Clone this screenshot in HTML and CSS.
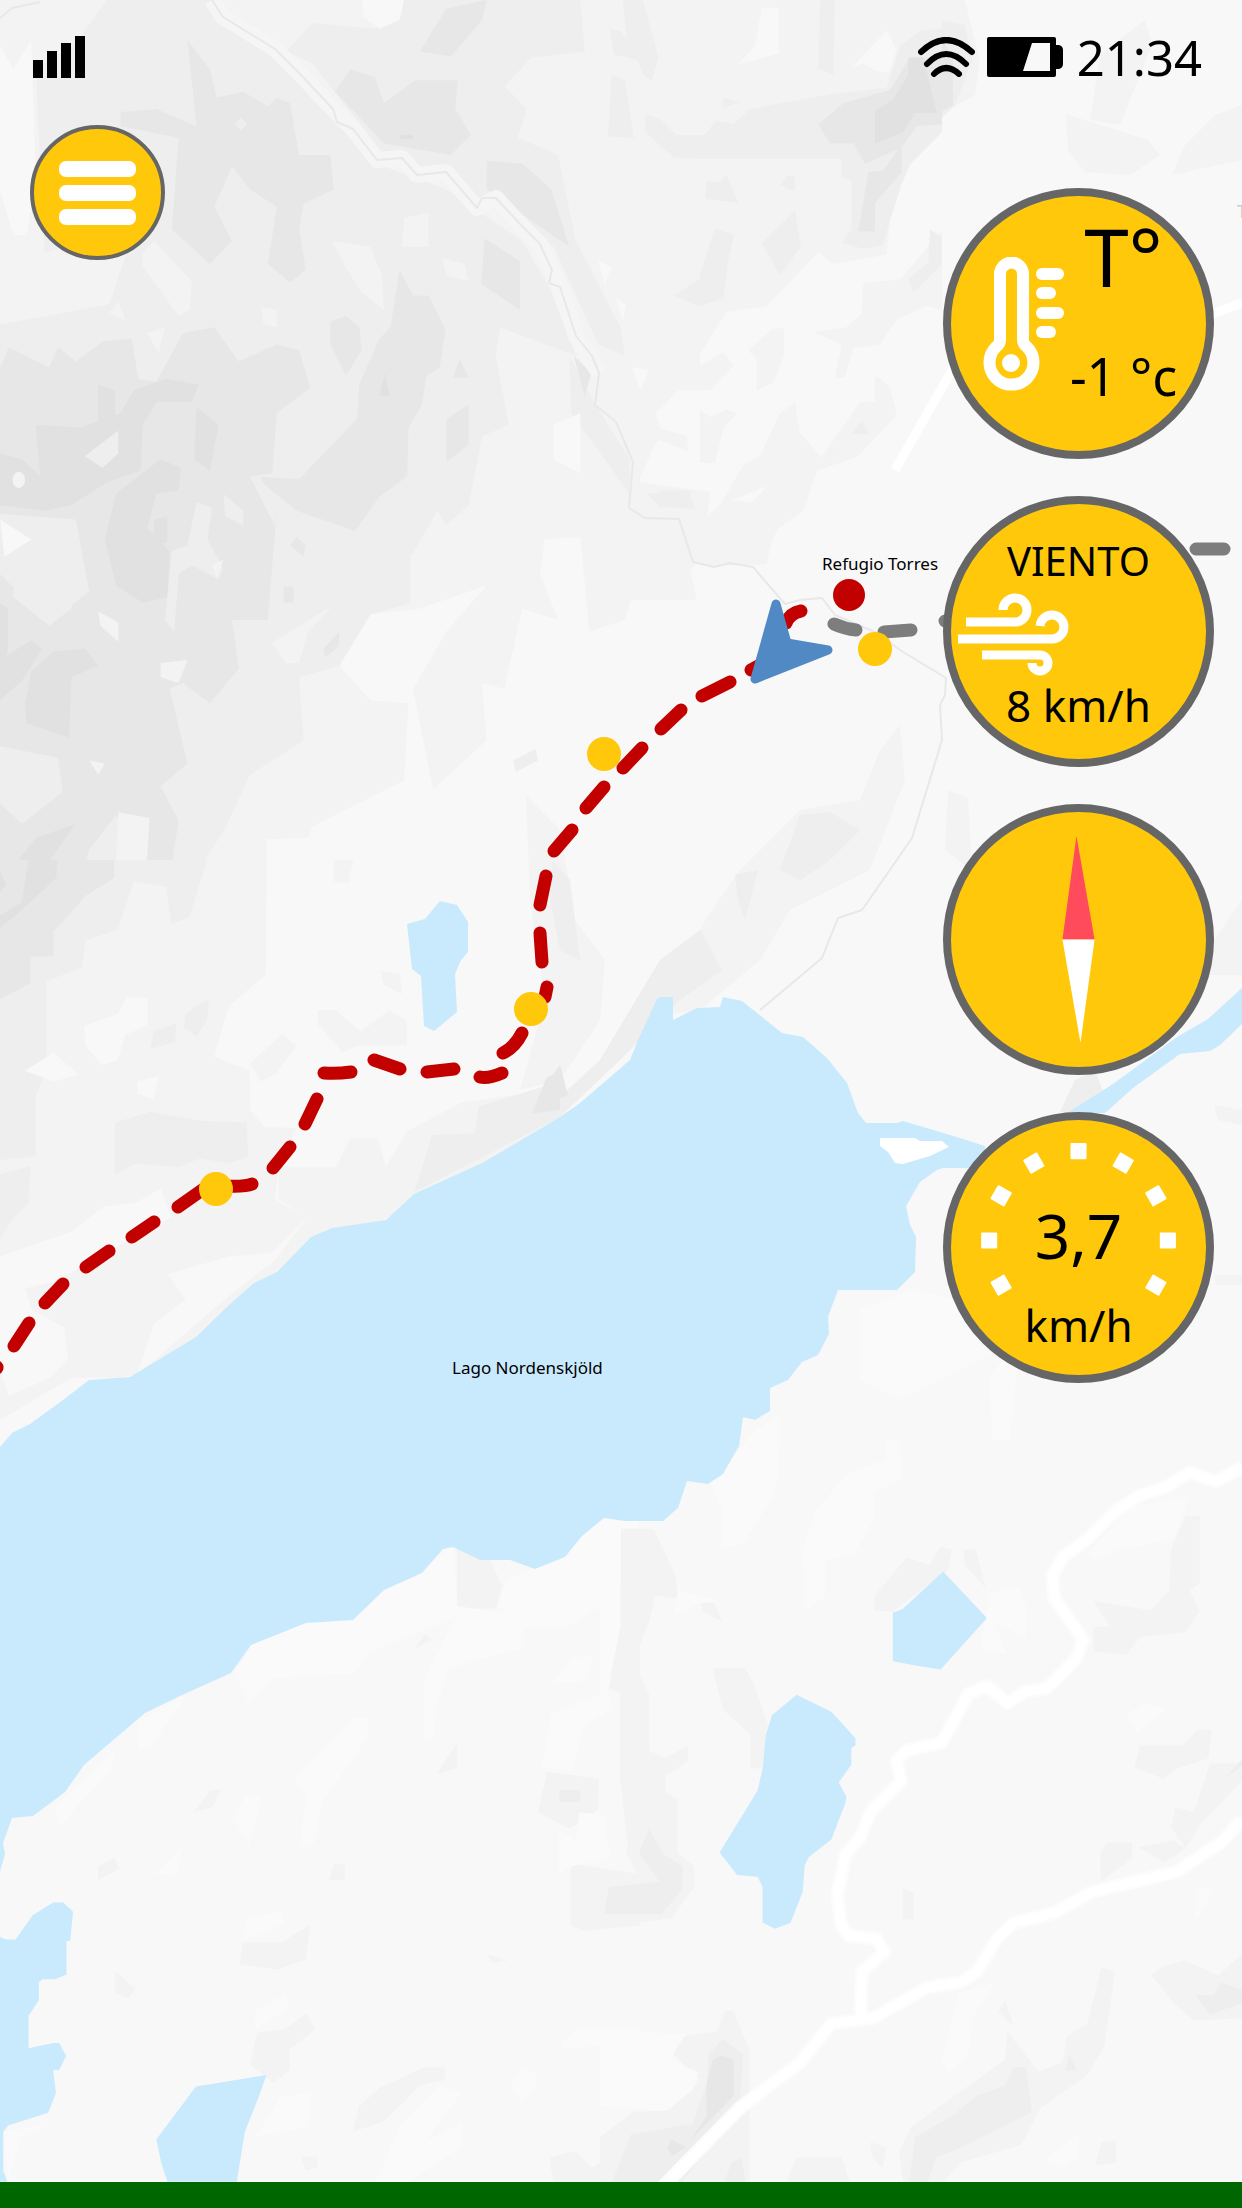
FILE: index.html
```html
<!DOCTYPE html>
<html lang="es">
<head>
<meta charset="utf-8">
<meta name="viewport" content="width=device-width, initial-scale=1">
<title>Ruta - Refugio Torres</title>
<link rel="stylesheet" href="styles.css">
</head>
<body>
<div class="screen">
  <svg class="map" viewBox="0 0 1242 2208" preserveAspectRatio="xMidYMid slice" role="img" aria-label="Mapa de la ruta">
    <rect class="land" width="1242" height="2208"/>

    <!-- Relief: centre and east -->
    <g class="g3">
      <path d="M940 0H965L980 60 975 95 940 115Z"/>
      <path d="M725 500L790 505 770 545 700 560 660 600 640 580Z"/>
      <path d="M526 795L560 830 575 920 605 960 600 1020 560 1080 520 1090 545 1000 530 900Z"/>
      <path d="M900 725L905 780 870 870 790 910 760 960 700 1010 660 1015 650 980 690 950 705 920 740 870 800 810 860 800 880 750Z"/>
      <path d="M1066 114L1110 128 1148 140 1160 155 1130 175 1085 172 1068 150Z"/>
      <path d="M1242 105L1215 115 1185 145 1172 175 1242 160Z"/>
      <path d="M1100 55L1145 20 1152 45 1120 125 1090 120Z"/>
      <path d="M948 790L968 798 972 870 945 850Z"/>
      <path d="M1214 1105L1242 1110V1125L1218 1120Z"/>
      <path d="M1215 1275H1242V1285H1215Z"/>
      <path d="M1242 900L1190 975 1242 975Z"/>
    </g>
    <g class="g2">
      <path d="M830 812L860 830 830 860 800 880 780 870 800 815Z"/>
      <path d="M735 875L758 870 745 920 738 900Z"/>
      <path d="M552 860L570 880 580 960 560 950 550 900Z"/>
      <path d="M660 960L700 930 722 970 680 1000 620 1060 560 1117 530 1125 600 1060Z"/>
      <path d="M1075 1080L1095 1070 1110 1110 1060 1112Z"/>
      <path d="M940 20L965 25 972 60 955 105 940 120Z"/>
    </g>
    <g class="g1">
      <path d="M940 32L953 60V105L940 112Z"/>
      <path d="M560 1065L568 1095 535 1110 535 1100Z"/>
    </g>
    <path class="g4" d="M1175 780L1242 740V830L1200 850Z"/>
    <path class="g5" d="M990 1375L1020 1340 1010 1440 992 1440ZM860 1310L910 1290 960 1300 1000 1350 900 1400 860 1380Z"/>

    <!-- Relief: north ridge -->
    <svg x="600" width="342" height="600" viewBox="0 0 1026 1568" preserveAspectRatio="none">
      <path class="g3" d="M0 0H1026V345L930 430 905 480 870 575 860 665 700 690 655 660 500 800 380 815 265 975 370 920 400 955 330 1020 220 1020 160 1080 180 1120 260 1140 265 1180 180 1150 120 1180 120 1260 330 1285 320 1370 400 1370 500 1270 360 1320 430 1215 480 1190 540 1080 585 1050 600 1130 665 1195 780 1050 825 1050 825 980 870 1010 890 1085 770 1195 650 1230 610 1335 520 1390 500 1475 345 1480 280 1470 240 1360 130 1350 0 1240Z"/>
      <path class="g3" d="M445 915L520 858H552V930L520 1000 470 1020V940ZM640 868L740 855 785 820 790 740 900 730 940 690 1026 600V810L980 800 890 835 840 900 760 910 735 985 705 988 725 900ZM300 1070L330 1090 380 1070 410 1080 370 1120 345 1210H300ZM60 1568L65 1520 180 1370 240 1360 290 1568Z"/>
      <path class="g2" d="M130 300H160L210 340 310 355 350 315 400 325 450 285 700 245 860 230 900 120 960 80 1026 75V345L930 430 905 480 870 575 850 640 790 650 725 635 755 600V475L725 460V415H225L130 340ZM660 0H705L700 195 655 180ZM318 475L360 475 380 455 415 530 318 520ZM540 485L560 460H585V500ZM485 635L585 550 603 645 540 718ZM345 595L402 615 385 680 370 780 255 812 217 770 305 705ZM990 600L1026 620V690L940 765 925 730 985 685ZM370 255L418 268 370 282ZM180 1282H265L285 1330 200 1325ZM755 1135L785 1100 808 1135Z"/>
      <path class="g1" d="M655 325L730 270 870 235 930 150 1026 150V325L950 330 905 385V450L825 530V605H775L805 450 850 445 895 390 795 428 760 375H690Z"/>
      <path class="g0" d="M825 290L880 260 925 195V150H970L1010 295H945L910 345 825 375Z"/>
      <path class="g4" d="M485 20H537V140L415 168 465 120ZM755 175L860 80 890 130 865 190 825 185 790 165Z"/>
    </svg>

    <!-- Relief: north-west massif -->
    <svg width="700" height="900" viewBox="0 0 1568 1568" preserveAspectRatio="none">
      <path class="g3" d="M0 0H1568V640L1470 720 1480 750 1430 840 1520 905 1430 1000 1400 1080 1320 1100 1300 935 1220 940 1210 1000 1250 1080 1170 1060 1130 1200 1080 1190 1090 1290 970 1375 925 1200 1000 1100 1090 1020 940 1060 830 1070 760 1160 830 1220 915 1225 905 1360 700 1440 690 1460 597 1462V1568H0Z"/>
      <path class="g2" d="M0 565L110 550 245 530 300 400 100 440 80 120 170 75 240 0H480L700 150 860 290 1000 330 1170 420 1230 500 1290 620 1120 570 1110 620 1140 740 1080 760 1050 880 1000 915 980 890 920 970 920 1050 830 1070 760 1160 670 1180 680 1290 560 1350 500 1450 420 1540 380 1568H0Z"/>
      <path class="g2" d="M840 50L900 0H1300L1310 90 1190 100 1130 150 1180 190 1160 240 1250 270 1290 420 1390 570 1400 620 1340 600 1240 430 1040 330 870 280 700 110 640 90 700 40Z"/>
      <path class="g2" d="M1275 620L1330 700 1410 800 1410 860 1280 720Z"/>
      <path class="g2" d="M1395 0H1440L1475 100 1460 140 1440 130 1430 105 1375 95 1365 50 1390 55 1405 70ZM1370 130L1400 140 1420 240 1362 238ZM1445 200L1475 205 1515 235 1568 235V277L1510 275 1445 230ZM1450 860L1550 855 1540 880 1480 885ZM1510 515L1568 485V535ZM1150 1325L1200 1305 1205 1325 1155 1345Z"/>
      <g class="g1">
        <path d="M420 70L470 120 485 170 545 160 600 185 620 170 650 180 670 270 740 270 748 330 680 355 670 400 685 470 650 492 600 460 620 360 560 330 520 290 480 360 520 420 470 460 385 400 400 240 270 220 270 195 350 190 440 220Z"/>
        <path d="M750 160L785 120 840 135 860 180 930 140 1025 140 1020 190 1055 235 1010 270 860 250 800 200Z"/>
        <path d="M940 90L1000 15 1090 0 1080 35 1010 98Z"/>
        <path d="M1090 280L1170 285 1235 330 1275 430 1200 390 1090 330ZM1085 415L1165 455V540L1078 495Z"/>
        <path d="M895 470L925 515 960 515 998 575 985 640 955 655 945 705 915 745 912 830 850 865 795 925 665 890 570 830 670 835 800 730 805 670 850 590 875 570Z"/>
        <path d="M0 640L20 605 110 640 130 605 170 630 230 595 295 590 310 660 350 665 410 580 480 570 535 630 620 600 670 610 695 675 620 720 610 825 560 830 620 890 600 1080 520 1080 535 1165 470 1225 410 1190 380 1200 420 1330 360 1370 400 1430 380 1530 300 1480 260 1420 200 1480 170 1568H0V1400L50 1435 140 1380 130 1320 0 1300V1000L110 1085 200 1030 170 905 0 895Z"/>
        <path d="M740 560L775 550 805 570 810 610 775 655 740 600ZM1000 730L1050 705V775L1000 805ZM1015 658L1030 625 1050 658ZM1285 620L1325 650 1310 690ZM725 1130L760 1100 760 1125 728 1145ZM650 950L665 935 685 950 680 970ZM635 1022H658V1050H635Z"/>
      </g>
      <g class="g0">
        <path d="M80 740L180 745 270 720 300 680 370 660 445 670 430 700 350 700 320 740 315 820 240 840 160 880 100 890 0 880V790L50 800 90 830Z"/>
        <path d="M360 800L405 815 400 855 350 860 330 920 380 960 375 1040 320 1050 260 1020 235 940 260 860ZM440 710L490 740 470 820 435 800Z"/>
        <path d="M70 1170L120 1135 190 1130 220 1160 160 1180 155 1285 60 1260 55 1230ZM0 1150L70 1115 95 1130 50 1185 0 1220ZM0 1050L18 1060V1130L0 1190ZM80 1460L170 1435 110 1500 90 1568H20L40 1500ZM220 670L258 680V730L220 750ZM850 690L862 650 873 690ZM895 235H925V242H895ZM345 905L375 900V945L345 950Z"/>
      </g>
      <g class="g2">
        <path d="M190 795L265 750V790L230 815ZM440 875L475 885 465 940 500 990 490 1010 430 985 400 1000 390 1100 370 1080 385 960 420 950ZM525 215L540 205 553 215 540 228ZM500 860L545 890 545 915 505 900ZM30 980L100 990 130 950 175 1000 160 1060 110 1090 30 1040ZM560 830L580 828 622 885 615 915Z"/>
      </g>
      <g class="g3">
        <path d="M745 420L830 430 855 480 860 540 810 510 770 460ZM905 380L960 370 960 430 900 430ZM990 450L1040 460 1050 490 1000 480ZM320 440L345 420 430 490 425 540 400 550 320 465ZM245 545L265 525 282 560ZM585 535L620 540V570L590 565ZM330 580L370 570 355 615ZM360 1155L420 1150 400 1190 360 1180ZM220 1065L265 1085V1118L225 1090ZM200 1325L235 1330 220 1350ZM610 1120L745 1055 690 1100 670 1155 640 1155ZM475 985L500 975 485 1008ZM265 1415L335 1425 330 1490 305 1568H235L260 1500ZM915 970L960 940 1000 925 940 975Z"/>
      </g>
      <path class="g4" d="M0 80L30 120 70 70 80 310 60 410 30 410 0 330ZM1240 740L1300 720V825L1240 800ZM0 905L70 940 10 970ZM810 0H905L895 35 850 50 815 30ZM1340 455L1370 465 1355 495ZM1380 520L1402 530 1395 560ZM1415 640L1452 645 1435 680ZM1470 715L1568 680V760L1480 740Z"/>
      <circle class="g3" cx="42" cy="836" r="14"/>
    </svg>

    <!-- Relief: west shore -->
    <svg y="860" width="560" height="560" viewBox="0 0 1568 1568">
      <path class="g3" d="M0 0H745V320L640 410 600 550 700 590V700L740 748 830 750 780 860 770 950 860 1000 760 1100 640 1110 470 1160 520 1230 430 1300 385 1440 330 1450 200 1450 0 1568Z"/>
      <path class="g3" d="M1568 640L1290 680 1140 760 1080 860 1060 780 980 780 940 860 780 860V950L860 1000 770 1120 630 1230 385 1440 1080 1005 1568 720Z"/>
      <path class="g2" d="M0 0H580L530 160 480 180 465 75 375 60 330 195 240 225 230 300 130 340V590L100 660V830L0 840ZM520 430L585 388 580 450 550 495 515 470ZM420 530L430 480 495 455 490 510ZM322 735L420 705 560 730 690 735 695 830 640 850 560 835 500 860 380 850 322 880ZM0 880L85 857 80 960 40 1000 0 1060ZM1340 690L1568 620V720L1160 930 1210 770 1330 765Z"/>
      <path class="g1" d="M0 0H320V50L240 100 150 200V270H85V345L0 390Z"/>
      <path class="g0" d="M80 0H160L158 50 50 150 0 190V155L60 120ZM0 30L18 70 0 90Z"/>
      <path class="g1" d="M1530 610L1568 590V700L1490 710Z"/>
      <path class="g4" d="M235 465L330 430 355 385H413V460L385 475 350 490 330 560 285 575 240 520ZM70 590L150 540 220 600 150 620ZM385 620L445 605 430 670 385 655ZM0 1110L200 1040 290 970 380 960 450 920 480 1000 400 1040 250 1130 150 1180 70 1200 90 1260 180 1310 190 1400 140 1450 25 1500 0 1430Z"/>
      <path class="g3" d="M890 420H940L1010 480 1090 420 1140 450V520H1000L960 540 890 460ZM700 570L790 487 830 520 770 600 730 620ZM935 0H990L975 65 935 60ZM1065 310L1120 320 1125 375 1075 350Z"/>
    </svg>

    <!-- Relief: south-west -->
    <svg y="1400" width="640" height="808" viewBox="0 0 1568 1568" preserveAspectRatio="none">
      <path class="g3" d="M1120 280L1200 310 1230 360 1215 405 1120 405ZM1520 250H1568V920L1540 880 1520 740V570L1495 555 1505 440H1520ZM1340 722L1467 735 1465 795 1395 832 1318 800ZM1398 900L1568 920V1020L1430 1030 1398 1020ZM595 1053H690L760 1018 750 1085 680 1105 587 1095ZM630 1228L700 1220 750 1190 773 1222 710 1260V1300L670 1325 613 1290ZM865 1420L880 1370 930 1335 1040 1295H1090V1318L1030 1330 940 1400ZM240 905L280 888 292 910 240 932ZM475 800L515 757H542L520 790ZM1070 725L1120 665V715ZM1345 1470L1410 1458 1450 1490 1490 1470 1480 1425 1568 1380V1517H1355ZM820 900L845 902V932H805ZM282 1108L332 1142 315 1162 282 1150ZM737 1468H777V1490L750 1495ZM1012 485L1040 455 1058 465ZM1190 1075L1245 1087 1210 1093Z"/>
      <path class="g2" d="M1370 757H1422V780H1370ZM1495 945L1568 935V998H1480ZM1568 1420V1517H1500Z"/>
      <path class="g5" d="M575 530L620 470 750 430 865 427 950 365 1110 285 1120 400 1160 405 1285 420V480L1100 520 1070 590 1060 660H1040V540L1120 420 900 490 870 530 670 540 610 590ZM720 735L870 615 903 620 900 655 790 780 770 860 735 868 750 770ZM340 625L460 570 370 670 338 680ZM135 790L280 680 275 715 145 827ZM1240 350L1310 325 1480 230 1568 235 1510 380 1390 440 1280 440 1220 400ZM1350 610L1490 565 1500 600 1430 630 1400 720 1327 712ZM597 1050L600 1010 690 990 695 1015ZM380 920L445 868 433 922ZM572 810L600 770H640L610 865ZM1370 920V835L1410 855 1420 800 1480 805 1495 890 1400 905ZM625 1430L690 1350 760 1347 755 1410ZM920 1517L980 1410 1080 1330 1130 1345 1040 1440 1135 1400 1130 1450 1000 1517ZM1375 1245L1420 1220H1568V1250L1380 1258ZM1250 1330L1275 1295 1315 1310 1310 1340 1275 1362ZM625 1220V1185L700 1152 708 1180ZM10 1420L120 1405 50 1430 20 1517ZM1355 548L1400 500 1450 498 1440 545Z"/>
      <path class="water" d="M0 1042L15 1047H38L80 1000 130 975H155L179 993 172 1050H163V1115L135 1124H103L95 1130V1165L70 1195V1258L130 1248H145L162 1273 145 1300H130L137 1345 118 1383 20 1408 8 1420V1495L18 1517H0Z"/>
      <path class="water" d="M480 1332L653 1310 635 1350 600 1420 580 1517H410L395 1480 383 1435 435 1380Z"/>
    </svg>

    <!-- Relief, lagoons and roads: south-east -->
    <svg x="600" y="1400" width="642" height="808" viewBox="0 0 1568 1568" preserveAspectRatio="none">
      <path class="g3" d="M50 250H130L185 340 190 385 135 380 120 430 80 510 120 570V680L160 695 215 670V700L160 730V760L190 775V880L230 905V945L175 1005 0 1025V910L90 920 65 880 78 790 50 740V570L22 560 50 440ZM275 520H355L375 550 410 630 395 715H368V650L300 600ZM670 380L750 305 805 320 830 285 860 290 850 330 715 410H670ZM888 290H918L942 365 890 320ZM1430 225H1465V355L1440 370 1465 410 1430 450 1320 460 1285 495 1205 487V440H1245L1205 390 1345 408 1390 370 1395 290ZM1320 670H1425L1460 640H1493L1487 695 1410 715 1375 735 1305 712ZM1405 790L1450 800 1490 705H1568V740L1470 820 1430 870 1395 830ZM1222 935V880L1240 858H1300V890ZM1315 868L1400 855 1430 870 1380 898ZM740 948L765 955V1008H740ZM1225 1100L1258 1110 1232 1255 1190 1310 1075 1375 1030 1445 880 1480 840 1517H740L730 1460 760 1410 840 1365 990 1280 995 1225 1070 1303 1130 1285 1140 1235 1190 1210ZM1345 1115L1380 1097 1430 1088 1510 1117 1568 1075V1200L1450 1204 1400 1170ZM180 1270L200 1235 285 1225 305 1185H325L365 1260V1517H0V1430L80 1382 170 1378 245 1320ZM990 1165L1010 1215 972 1187ZM660 1440L700 1450 690 1490 665 1470ZM480 1470H590L610 1517H455ZM1225 1440L1260 1437V1480L1210 1485ZM245 390L280 395 298 430 250 410Z"/>
      <path class="g2" d="M120 830L152 880 203 905 200 950 150 998H10L22 945 145 935 95 880ZM1010 1295H1040L1055 1382 870 1455 820 1470 800 1517H755L770 1430 860 1390 920 1350 990 1330ZM1455 1155H1500L1515 1130 1568 1145V1170L1490 1193ZM300 1240L350 1270 340 1380 200 1517H30L75 1425 225 1405 260 1330 265 1270ZM1145 1270L1165 1300 1138 1302ZM320 1480L345 1470 355 1517H305ZM1525 735L1568 697V710Z"/>
      <path class="g1" d="M297 1272L327 1282V1350L220 1437 260 1390V1330L275 1280ZM165 1450L175 1435 210 1450 175 1467Z"/>
      <path class="g5" d="M0 240L50 240V440L22 550 0 600ZM270 160L380 60 440 30 435 150 420 190 350 280 300 285V215ZM495 290L530 210 610 140 700 115V75L730 80 740 150 670 180V230L620 300 550 310V380L500 410ZM180 415L190 370 290 390 245 395ZM930 480L950 375 1020 365 1040 400V460L960 430 995 495ZM1190 300L1290 210 1440 185 1400 270 1270 290 1210 310ZM875 1150L965 1130 910 1200 900 1270 850 1305 835 1280ZM1285 610L1330 590 1385 598 1310 645ZM1455 945L1503 950 1455 1008ZM1085 1475L1170 1425V1470L1130 1490ZM0 1225L210 1230 170 1280 240 1305 225 1340 160 1380 0 1370Z"/>
      <path class="water" d="M838 333L945 423 832 523 770 515 715 507V413L740 405Z"/>
      <path class="water" d="M480 572L565 605 600 635 624 657V670L614 675V708L583 742 602 770 598 785 565 853 510 887 500 903 495 955 465 1015 427 1026 397 1014V945L385 925 335 922 292 878 385 758 397 715 405 650 420 612Z"/>
      <path class="road-halo" d="M1568 130L1505 158 1440 140 1385 168 1320 185 1260 215 1190 270 1130 305 1105 340 1110 385 1180 465 1165 500 1090 560 1040 565 995 588 945 555 900 570 835 665 750 680 725 700 735 740 660 800 635 850 600 880 580 960 590 1020 610 1040 675 1045 695 1070 640 1110 635 1205M1568 815L1515 860 1475 880 1410 915 1200 955 1110 995 1010 1015 970 1045 920 1110 880 1130 800 1140 665 1200 565 1210 490 1285 340 1375 150 1530"/>
      <path class="road" d="M1568 130L1505 158 1440 140 1385 168 1320 185 1260 215 1190 270 1130 305 1105 340 1110 385 1180 465 1165 500 1090 560 1040 565 995 588 945 555 900 570 835 665 750 680 725 700 735 740 660 800 635 850 600 880 580 960 590 1020 610 1040 675 1045 695 1070 640 1110 635 1205M1568 815L1515 860 1475 880 1410 915 1200 955 1110 995 1010 1015 970 1045 920 1110 880 1130 800 1140 665 1200 565 1210 490 1285 340 1375 150 1530"/>
    </svg>
    <path class="road" d="M1242 303L1210 315M955 365L895 470"/>

    <!-- Footpath from the north -->
    <path class="path-halo" d="M212 0L223 17 275 49 301 75 333 109 353 129 377 160 402 158 417 175 446 172 477 208 496 198 520 224 540 244 560 287 576 336 599 373"/>
    <path class="path" d="M0 18L12 8 40 2M212 0L223 17 275 49 301 75 333 109 337 122 353 129 377 160 402 158 417 175 446 172 477 208 482 198 496 198 520 224 540 244 552 270 549 283 560 287 576 336 592 356 599 373 595 405 616 422 633 462 629 508 645 518 679 519 693 562 714 567 730 563 753 567 785 604 800 600 822 598 835 615 875 632 900 650 946 678 945 695 940 705 942 740 912 838 862 910 838 918 822 958 760 1010"/>

    <!-- Lakes and river -->
    <path class="water" d="M0 1447L12 1433 30 1424 63 1400 89 1380 130 1377 196 1337 229 1305 254 1283 277 1272 311 1237 332 1228 386 1220 414 1194 482 1163 560 1117 580 1103 630 1060 638 1040 657 999 660 997H673V1020L697 1008 720 1007 723 997 742 1001 782 1033 803 1037 827 1058 847 1083 858 1113 866 1123H897L903 1121 960 1138 985 1146V1168H943L937 1170 920 1182 906 1206 910 1225 916 1237 915 1272 897 1290H838L828 1317 829 1334 818 1355 802 1362 788 1380 770 1388V1411L755 1420 743 1417 739 1446 723 1474 708 1484 687 1481 678 1508 663 1521H625L604 1518 582 1536 565 1557 535 1569 510 1560H480L453 1547 443 1549 422 1573 384 1590 353 1620 306 1623 251 1645 231 1673 180 1696 145 1713 84 1765 65 1792 33 1816 12 1818 3 1843 5 1854 0 1872Z"/>
    <path class="island" d="M880 1138H915L920 1141H942L949 1147 930 1156 903 1164 895 1163 888 1152 880 1146Z"/>
    <path class="water" d="M1067 1113L1113 1084 1177 1037 1208 1019 1242 988V1024L1220 1045 1210 1051 1180 1054 1133 1088 1105 1113Z"/>
    <path class="water" d="M440 901L457 905 468 922V952L461 960 455 974 457 1012 434 1031 424 1026 421 976 412 969 407 924 425 919Z"/>

    <!-- Trail -->
    <path class="trail" d="M801 611Q790 613 786 623M751 670L762 664M702 696L730 682M661 729L681 710M623 768L642 748M586 808L604 787M554 851L572 830M546 876L540 905M540 933L542 962M547 987L545 997M522 1033Q515 1047 503 1053M502 1073Q488 1079 480 1077M454 1069L427 1072M400 1069L374 1060M351 1072Q337 1074 324 1073M317 1099L305 1124M290 1147L273 1168M252 1184Q245 1187 225 1186M205 1188L178 1207M154 1222L132 1237M109 1251L86 1267M63 1284L45 1303M29 1323L14 1346M-3 1367V1368"/>
    <path class="trail trail-done" d="M834 624Q845 629 856 630M884 632L911 630M945 621H960M1196 549H1224"/>
    <circle class="pin" cx="604" cy="754" r="17"/>
    <circle class="pin" cx="531" cy="1009" r="17"/>
    <circle class="pin" cx="216" cy="1189" r="17"/>
    <circle class="pin" cx="875" cy="649" r="17"/>
    <circle class="pin-end" cx="849" cy="595" r="16"/>
    <path class="position" d="M776 604L787 643 828 650 755 679Z"/>

    <text class="place" x="822" y="570">Refugio Torres</text>
    <text class="place" x="452" y="1374">Lago Nordenskjöld</text>
    <text class="place-faint" x="1237" y="218">T</text>
  </svg>

  <header class="status">
    <svg class="signal" viewBox="0 0 53 42" role="img" aria-label="Cobertura"><path d="M0 24H10V42H0ZM14 15H24V42H14ZM28 7H38V42H28ZM42 0H52V42H42Z"/></svg>
    <div class="status-right">
      <svg class="wifi" viewBox="0 0 57 40" role="img" aria-label="Wifi"><path d="M3 15Q28 -9 54 15M9 27Q28 7 48 27M16 37Q28 25 41 37"/></svg>
      <svg class="battery" viewBox="0 0 76 40" role="img" aria-label="Batería"><path fill-rule="evenodd" d="M2 0H67Q69 0 69 2V8H72Q76 9 76 13V27Q76 31 72 32H69V38Q69 40 67 40H2Q0 40 0 38V2Q0 0 2 0ZM45 6L36 34H63V6Z"/></svg>
      <time class="clock">21:34</time>
    </div>
  </header>

  <main class="controls">
    <button class="menu" type="button" aria-label="Menú"><span class="bar"></span><span class="bar"></span><span class="bar"></span></button>

    <div class="gauges">
      <section class="gauge gauge-temp">
        <svg class="thermometer" viewBox="0 0 81 134" aria-hidden="true">
          <path class="tube" d="M17 17A11 11 0 0 1 40 17V83Q40 87 44 90A22 22 0 1 1 13 90Q17 87 17 83Z"/>
          <circle cx="28" cy="106" r="9"/>
          <rect x="53" y="11" width="28" height="12" rx="6"/>
          <rect x="53" y="30" width="20" height="12" rx="6"/>
          <rect x="53" y="50" width="28" height="12" rx="6"/>
          <rect x="53" y="69" width="20" height="12" rx="6"/>
        </svg>
        <div class="temp-text">
          <span class="temp-title">T°</span>
          <span class="temp-value">-1 °c</span>
        </div>
      </section>

      <section class="gauge gauge-wind">
        <h2 class="wind-title">VIENTO</h2>
        <svg class="wind" viewBox="0 0 111 84" aria-hidden="true"><path d="M8 29H57A12 12 0 1 0 45 17M0 46H94A12 12 0 1 0 82 33M24 62H82A8 8 0 1 1 74 70"/></svg>
        <span class="unit">8 km/h</span>
      </section>

      <section class="gauge" aria-label="Brújula">
        <svg class="dial" viewBox="8 8 254 254" aria-hidden="true">
          <path class="north" d="M133 32L151 135H119Z"/>
          <path class="south" d="M137 238L151 135H119Z"/>
        </svg>
      </section>

      <section class="gauge gauge-speed">
        <svg class="dial" viewBox="8 8 254 254" aria-hidden="true">
          <g class="ticks" transform="translate(135 128)">
            <rect x="-8" y="-97" width="16" height="16" rx="1"/>
            <rect x="-8" y="-97" width="16" height="16" rx="1" transform="rotate(30)"/>
            <rect x="-8" y="-97" width="16" height="16" rx="1" transform="rotate(60)"/>
            <rect x="-8" y="-97" width="16" height="16" rx="1" transform="rotate(90)"/>
            <rect x="-8" y="-97" width="16" height="16" rx="1" transform="rotate(120)"/>
            <rect x="-8" y="-97" width="16" height="16" rx="1" transform="rotate(-30)"/>
            <rect x="-8" y="-97" width="16" height="16" rx="1" transform="rotate(-60)"/>
            <rect x="-8" y="-97" width="16" height="16" rx="1" transform="rotate(-90)"/>
            <rect x="-8" y="-97" width="16" height="16" rx="1" transform="rotate(-120)"/>
          </g>
        </svg>
        <div class="speed-text">
          <span class="speed-value">3,7</span>
          <span class="unit">km/h</span>
        </div>
      </section>
    </div>
  </main>

  <footer class="bottom-bar"></footer>
</div>
</body>
</html>
```
FILE: styles.css
```css
* {
  box-sizing: border-box;
}

body {
  margin: 0;
  color: #000;
  font-family: "Noto Sans", "Open Sans", sans-serif;
}

.screen {
  position: relative;
  display: flex;
  flex-direction: column;
  min-height: 100vh;
  overflow: hidden;
}

/* Map backdrop */
.map {
  position: absolute;
  inset: 0;
  width: 100%;
  height: 100%;
}

.land { fill: #f8f8f8; }
.g0 { fill: #e1e1e1; }
.g1 { fill: #e7e7e7; }
.g2 { fill: #eee; }
.g3 { fill: #f3f3f3; }
.g4 { fill: #f8f8f8; }
.g5 { fill: #fafafa; }
.water { fill: #c9eafd; }
.island { fill: #fff; }

.road,
.road-halo,
.path,
.path-halo {
  fill: none;
  stroke-linejoin: round;
  vector-effect: non-scaling-stroke;
}

.road { stroke: #fff; stroke-width: 9; }
.road-halo { stroke: #fcfcfc; stroke-width: 14; }
.path { stroke: #e8e8e8; stroke-width: 2; }
.path-halo { stroke: #f5f5f5; stroke-width: 16; }

.trail {
  fill: none;
  stroke: #c30000;
  stroke-width: 13;
  stroke-linecap: round;
}

.trail-done { stroke: #7d7d7d; }
.pin { fill: #ffc80b; }
.pin-end { fill: #c30000; }

.position {
  fill: #5089c3;
  stroke: #5089c3;
  stroke-width: 9;
  stroke-linejoin: round;
}

.place { font-size: 17px; }
.place-faint { font-size: 18px; fill: #ccc; }

/* Status bar */
.status {
  position: relative;
  display: flex;
  justify-content: space-between;
  align-items: center;
  padding: 27px 40px 0 33px;
}

.status-right {
  display: flex;
  align-items: center;
  gap: 12px;
}

.signal { width: 53px; height: 42px; }
.battery { width: 76px; height: 40px; }

.wifi {
  width: 57px;
  height: 40px;
  fill: none;
  stroke: #000;
  stroke-width: 6;
  stroke-linecap: round;
}

.clock {
  padding-left: 2px;
  font-size: 49px;
  line-height: 60px;
}

/* Menu and gauges */
.controls {
  position: relative;
  flex: 1;
  display: flex;
  justify-content: space-between;
  align-items: flex-start;
  padding: 38px 28px 38px 30px;
}

.menu {
  display: flex;
  flex-direction: column;
  justify-content: center;
  align-items: center;
  gap: 8px;
  width: 135px;
  height: 135px;
  padding: 0;
  border: 4px solid #666;
  border-radius: 50%;
  background: #ffc80b;
}

.bar {
  width: 77px;
  height: 16px;
  border-radius: 7px;
  background: #fff;
}

.gauges {
  display: flex;
  flex-direction: column;
  gap: 37px;
  padding-top: 63px;
}

.gauge {
  display: grid;
  width: 271px;
  height: 271px;
  border: 8px solid #666;
  border-radius: 50%;
  background: #ffc80b;
}

.gauge-temp {
  grid-template-columns: 81px 1fr;
  align-items: center;
  padding: 0 23px 0 32px;
}

.thermometer {
  width: 81px;
  height: 134px;
  fill: #fff;
}

.tube {
  fill: none;
  stroke: #fff;
  stroke-width: 12;
}

.temp-text {
  display: flex;
  flex-direction: column;
  align-items: center;
  gap: 50px;
  padding-bottom: 26px;
  white-space: nowrap;
}

.temp-title { font-size: 80px; line-height: 80px; }
.temp-value { font-size: 52px; line-height: 60px; }

.gauge-wind {
  align-content: start;
  justify-items: center;
  padding-top: 25px;
}

.wind-title {
  margin: 0;
  font-size: 40px;
  font-weight: 400;
  line-height: 64px;
}

.wind {
  justify-self: start;
  width: 111px;
  height: 84px;
  margin-left: 7px;
  fill: none;
  stroke: #fff;
  stroke-width: 9;
}

.unit { font-size: 44px; line-height: 56px; }

.dial,
.speed-text {
  grid-area: 1 / 1;
  width: 100%;
}

.north { fill: #ff4b5c; }
.south,
.ticks { fill: #fff; }

.speed-text {
  display: flex;
  flex-direction: column;
  align-items: center;
  gap: 26px;
  padding-top: 79px;
}

.speed-value { font-size: 62px; line-height: 72px; }

.bottom-bar {
  position: relative;
  height: 26px;
  background: #060;
}
```
